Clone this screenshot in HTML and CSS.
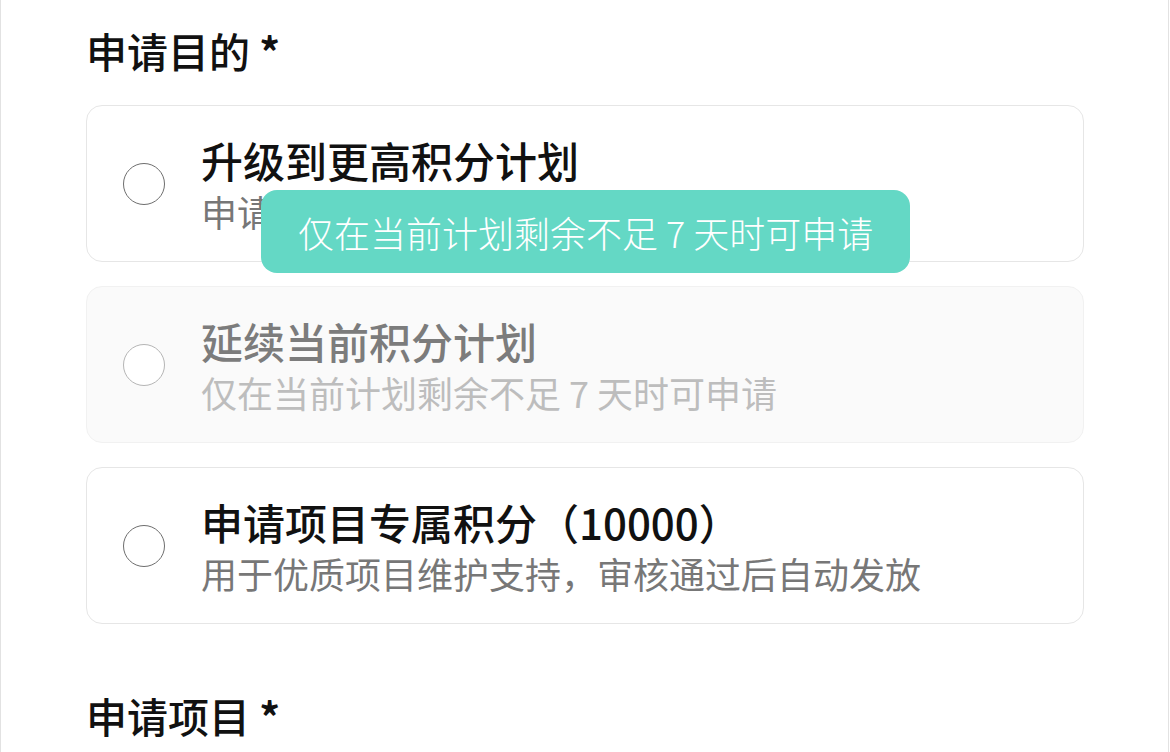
FILE: index.html
```html
<!DOCTYPE html>
<html lang="zh-CN">
<head>
    <meta charset="UTF-8">
    <title>申请目的</title>
    <link rel="stylesheet" href="styles.css">
</head>
<body>
    <div class="page">
        <section class="field">
            <h2 class="field-label">申请目的 <span class="req">*</span></h2>
            <div class="options">
                <label class="option has-tip">
                    <span class="radio"></span>
                    <span class="option-text">
                        <span class="option-title">升级到更高积分计划</span>
                        <span class="option-desc">申请更高额度的积分计划</span>
                    </span>
                    <span class="tip">仅在当前计划剩余不足 7 天时可申请</span>
                </label>
                <label class="option disabled">
                    <span class="radio"></span>
                    <span class="option-text">
                        <span class="option-title">延续当前积分计划</span>
                        <span class="option-desc">仅在当前计划剩余不足 7 天时可申请</span>
                    </span>
                </label>
                <label class="option">
                    <span class="radio"></span>
                    <span class="option-text">
                        <span class="option-title">申请项目专属积分（10000）</span>
                        <span class="option-desc">用于优质项目维护支持，审核通过后自动发放</span>
                    </span>
                </label>
            </div>
        </section>

        <section class="field">
            <h2 class="field-label">申请项目 <span class="req">*</span></h2>
        </section>
    </div>
</body>
</html>
```

FILE: styles.css
```css
body {
    margin: 0;
    padding: 0;
    background-color: #fff;
    font-family: "Noto Sans CJK SC", "Noto Sans", sans-serif;
    color: #111;
}
.page {
    width: 1169px;
    height: 752px;
    border-left: 1px solid #e2e2e2;
    border-right: 1px solid #e2e2e2;
    padding: 22px 84px 0 85px;
    box-sizing: border-box;
    overflow: hidden;
}
.field + .field {
    margin-top: 63px;
}
.field-label {
    margin: 0;
    font-size: 41px;
    line-height: 56px;
    font-weight: 500;
    color: #111;
}
.req {
    font-weight: 700;
}
.options {
    margin-top: 27px;
    display: flex;
    flex-direction: column;
    gap: 24px;
}
.option {
    position: relative;
    display: flex;
    align-items: center;
    gap: 36px;
    height: 157px;
    box-sizing: border-box;
    padding: 0 36px;
    border: 1px solid #e6e6e6;
    border-radius: 16px;
    background-color: #fff;
}
.radio {
    flex: none;
    width: 42px;
    height: 42px;
    box-sizing: border-box;
    border: 1px solid #6e6e6e;
    border-radius: 50%;
    background-color: #fff;
}
.option-text {
    display: flex;
    flex-direction: column;
}
.option-title {
    font-size: 42px;
    line-height: 54px;
    font-weight: 500;
    color: #111;
}
.option-desc {
    font-size: 36px;
    line-height: 48px;
    color: #777;
}
.option.disabled {
    background-color: #fafafa;
    border-color: #f1f1f1;
}
.option.disabled .radio {
    border-color: #b5b5b5;
}
.option.disabled .option-title {
    color: #7c7c7c;
}
.option.disabled .option-desc {
    color: #bdbdbd;
}
.tip {
    position: absolute;
    left: 174px;
    top: 84px;
    z-index: 2;
    height: 83px;
    padding: 0 37px;
    box-sizing: border-box;
    display: flex;
    align-items: center;
    background-color: #64d8c5;
    border-radius: 16px;
    color: #fff;
    font-size: 36px;
    font-weight: 300;
    white-space: nowrap;
}
```
